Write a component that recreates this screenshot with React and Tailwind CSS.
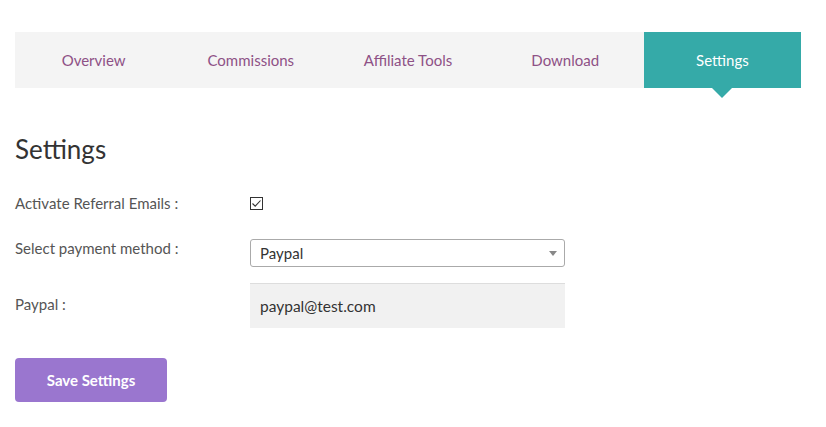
import { useState } from 'react'

const tabs = ['Overview', 'Commissions', 'Affiliate Tools', 'Download', 'Settings']

export default function App() {
  const [activo, setActivo] = useState('Settings')
  const [referral, setReferral] = useState(true)
  const [metodo, setMetodo] = useState('Paypal')

  return (
    <div className="min-h-screen bg-white pl-[15px] pr-[25px] pt-8 font-['Lato',sans-serif] text-[15px] text-[#555]">
      <nav className="flex h-14 bg-[#f4f4f4]">
        {tabs.map((t) => (
          <button
            key={t}
            type="button"
            onClick={() => setActivo(t)}
            className={`relative flex flex-1 items-center justify-center ${
              activo === t ? 'bg-[#35aaa8] text-white' : 'text-[#8e5186]'
            }`}
          >
            {t}
            {activo === t && (
              <span className="absolute left-1/2 top-full -ml-[10px] h-0 w-0 border-x-[10px] border-t-[10px] border-x-transparent border-t-[#35aaa8]" />
            )}
          </button>
        ))}
      </nav>

      <h2 className="mt-[45px] text-[26px] leading-8 text-[#333]">Settings</h2>

      <div className="mt-[26px] flex h-6 items-center">
        <label className="w-[235px] leading-6">Activate Referral Emails :</label>
        <button
          type="button"
          role="checkbox"
          aria-checked={referral}
          onClick={() => setReferral((v) => !v)}
          className="grid h-[13px] w-[13px] place-items-center border border-[#333] bg-white"
        >
          {referral && (
            <svg viewBox="0 0 11 11" className="h-[11px] w-[11px]" fill="none" stroke="#333" strokeWidth="1.1">
              <path d="M1.5 5.5 L4.2 8.2 L9.5 2.5" />
            </svg>
          )}
        </button>
      </div>

      <div className="mt-[21px] flex items-start">
        <label className="w-[235px] leading-6">Select payment method :</label>
        <div className="relative mt-[3px] w-[315px]">
          <select
            value={metodo}
            onChange={(e) => setMetodo(e.target.value)}
            className="h-7 w-full appearance-none rounded-[3px] border border-[#aaa] bg-white px-[9px] text-[15px] text-[#333]"
          >
            <option>Paypal</option>
            <option>Bank Transfer</option>
          </select>
          <span className="pointer-events-none absolute right-[8px] top-[12px] h-0 w-0 border-x-[4px] border-t-[5px] border-x-transparent border-t-[#888]" />
        </div>
      </div>

      <div className="mt-4 flex items-start">
        <label className="mt-[9px] w-[235px] leading-6">Paypal :</label>
        <input
          type="text"
          defaultValue="paypal@test.com"
          className="h-[45px] w-[315px] border-t border-[#ddd] bg-[#f1f1f1] px-[10px] text-[15.5px] text-[#333] outline-none"
        />
      </div>

      <button
        type="button"
        className="mt-[30px] h-11 w-[152px] rounded-[4px] bg-[#9a76cf] text-[15px] font-bold text-white"
      >
        Save Settings
      </button>
    </div>
  )
}
